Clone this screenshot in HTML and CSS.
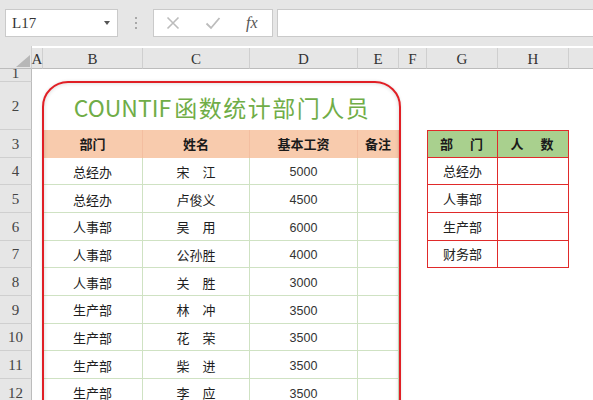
FILE: index.html
```html
<!DOCTYPE html>
<html lang="zh">
<head>
<meta charset="utf-8">
<title>COUNTIF</title>
<link rel="stylesheet" href="styles.css">
</head>
<body>
<div class="toolbar">
  <div class="namebox"><span class="ref">L17</span><span class="drop"></span></div>
  <div class="dots"><i></i><i></i><i></i></div>
  <div class="fbtns">
    <svg class="ico" width="14" height="14" viewBox="0 0 14 14"><path d="M1.5 1.5L12.5 12.5M12.5 1.5L1.5 12.5" stroke="#bcbcbc" stroke-width="1.6" fill="none"/></svg>
    <svg class="ico" width="16" height="14" viewBox="0 0 16 14"><path d="M1.5 7.5L6 12L14.5 2" stroke="#bcbcbc" stroke-width="1.8" fill="none"/></svg>
    <span class="fx">fx</span>
  </div>
  <div class="finput"></div>
</div>
<div class="sheet">
  <div class="corner"><svg width="32" height="23" viewBox="0 0 32 23"><polygon points="30,9 30,21 16,21" fill="#b7b7b7"/></svg></div>
  <div class="ch">A</div><div class="ch">B</div><div class="ch">C</div><div class="ch">D</div><div class="ch">E</div><div class="ch">F</div><div class="ch">G</div><div class="ch">H</div><div class="ch last"></div>

  <div class="rh r1">1</div><div class="c"></div><div class="c"></div><div class="c"></div><div class="c"></div><div class="c"></div><div class="c"></div><div class="c"></div><div class="c"></div><div class="c"></div>

  <div class="rh">2</div><div class="c"></div><div class="title"><span class="lat">COUNTIF</span><span class="cjk">函数统计部门人员</span></div><div class="c"></div><div class="c"></div><div class="c"></div><div class="c"></div>

  <div class="rh">3</div><div class="c"></div><div class="th">部门</div><div class="th">姓名</div><div class="th">基本工资</div><div class="th">备注</div><div class="c"></div><div class="gh first">部　门</div><div class="gh">人　数</div><div class="c"></div>

  <div class="rh">4</div><div class="c"></div><div class="td">总经办</div><div class="td">宋　江</div><div class="td num">5000</div><div class="td"></div><div class="c"></div><div class="gd first">总经办</div><div class="gd"></div><div class="c"></div>
  <div class="rh">5</div><div class="c"></div><div class="td">总经办</div><div class="td">卢俊义</div><div class="td num">4500</div><div class="td"></div><div class="c"></div><div class="gd first">人事部</div><div class="gd"></div><div class="c"></div>
  <div class="rh">6</div><div class="c"></div><div class="td">人事部</div><div class="td">吴　用</div><div class="td num">6000</div><div class="td"></div><div class="c"></div><div class="gd first">生产部</div><div class="gd"></div><div class="c"></div>
  <div class="rh">7</div><div class="c"></div><div class="td">人事部</div><div class="td">公孙胜</div><div class="td num">4000</div><div class="td"></div><div class="c"></div><div class="gd first">财务部</div><div class="gd"></div><div class="c"></div>
  <div class="rh">8</div><div class="c"></div><div class="td">人事部</div><div class="td">关　胜</div><div class="td num">3000</div><div class="td"></div><div class="c"></div><div class="c"></div><div class="c"></div><div class="c"></div>
  <div class="rh">9</div><div class="c"></div><div class="td">生产部</div><div class="td">林　冲</div><div class="td num">3500</div><div class="td"></div><div class="c"></div><div class="c"></div><div class="c"></div><div class="c"></div>
  <div class="rh">10</div><div class="c"></div><div class="td">生产部</div><div class="td">花　荣</div><div class="td num">3500</div><div class="td"></div><div class="c"></div><div class="c"></div><div class="c"></div><div class="c"></div>
  <div class="rh">11</div><div class="c"></div><div class="td">生产部</div><div class="td">柴　进</div><div class="td num">3500</div><div class="td"></div><div class="c"></div><div class="c"></div><div class="c"></div><div class="c"></div>
  <div class="rh">12</div><div class="c"></div><div class="td">生产部</div><div class="td">李　应</div><div class="td num">3500</div><div class="td"></div><div class="c"></div><div class="c"></div><div class="c"></div><div class="c"></div>

  <div class="shape"></div>
</div>
</body>
</html>
```

FILE: styles.css
```css
* { box-sizing: border-box; }
html, body { margin: 0; padding: 0; }
body {
  width: 593px;
  height: 400px;
  overflow: hidden;
  background: #ffffff;
  font-family: "Noto Sans CJK SC", "Noto Sans", sans-serif;
  color: #222;
}
.toolbar {
  height: 46px;
  background: #e6e6e6;
  display: flex;
  align-items: center;
  padding-left: 5px;
}
.namebox {
  width: 113px;
  height: 28px;
  background: #fff;
  border: 1px solid #cacaca;
  display: flex;
  align-items: center;
  justify-content: space-between;
  padding: 0 7px 0 6px;
}
.ref {
  font-family: "Liberation Serif", serif;
  font-size: 15px;
  color: #333;
}
.drop {
  width: 0; height: 0;
  border-left: 3px solid transparent;
  border-right: 3px solid transparent;
  border-top: 4px solid #555;
}
.dots {
  width: 35px;
  display: flex;
  flex-direction: column;
  align-items: center;
  gap: 3px;
}
.dots i {
  display: block;
  width: 2px; height: 2px;
  background: #a8a8a8;
}
.fbtns {
  width: 120px;
  height: 28px;
  background: #fff;
  border: 1px solid #cacaca;
  display: flex;
  align-items: center;
  padding-left: 12px;
  gap: 25px;
}
.fx {
  font-family: "Liberation Serif", serif;
  font-style: italic;
  font-size: 16px;
  color: #555;
}
.finput {
  margin-left: 4px;
  flex: 1;
  height: 28px;
  background: #fff;
  border: 1px solid #cacaca;
  border-right: none;
}
.sheet {
  position: relative;
  display: grid;
  grid-template-columns: 32px 11px 100px 107px 108px 41px 28px 71px 71px 1fr;
  grid-template-rows: 23px 13px 48px repeat(10, 27.67px);
}
.corner {
  background: #e6e6e6;
  border-bottom: 1px solid #bcbcbc;
  border-right: 1px solid #cfcfcf;
}
.corner svg { display: block; }
.ch {
  background: #e6e6e6;
  border-bottom: 1px solid #bcbcbc;
  border-right: 1px solid #cfcfcf;
  font-family: "Liberation Serif", serif;
  font-size: 15px;
  color: #333;
  display: flex;
  justify-content: center;
  align-items: center;
  padding-top: 3px;
  margin-top: 2px;
}
.ch.last { border-right: none; }
.rh {
  background: #e6e6e6;
  border-bottom: 1px solid #cfcfcf;
  border-right: 1px solid #bcbcbc;
  font-family: "Liberation Serif", serif;
  font-size: 15px;
  color: #444;
  display: flex;
  justify-content: center;
  align-items: center;
  overflow: hidden;
  line-height: 1;
  padding-top: 2px;
}
.rh.r1 { align-items: flex-end; padding-top: 0; }
.c { background: #fff; }
.title {
  grid-column: span 4;
  display: flex;
  justify-content: center;
  align-items: center;
  color: #70ad47;
  font-size: 23px;
  padding-top: 2px;
  padding-left: 2px;
}
.title .lat { margin-right: 3px; }
.title .cjk { letter-spacing: 1.5px; }
.th {
  background: #f8cbad;
  border-right: 1px solid #f3bea0;
  font-weight: 700;
  font-size: 13px;
  display: flex;
  justify-content: center;
  align-items: center;
  color: #1a1a1a;
}
.td {
  border-right: 1px solid #cfe2c3;
  border-bottom: 1px solid #cfe2c3;
  font-size: 13px;
  display: flex;
  justify-content: center;
  align-items: center;
  color: #1e1e1e;
  padding-top: 1px;
}
.td.num {
  font-family: "Liberation Sans", Arial, sans-serif;
  font-size: 12.5px;
  color: #333;
  padding-top: 3px;
}
.gh, .gd {
  border-right: 1px solid #e02a2a;
  border-bottom: 1px solid #e02a2a;
  font-size: 13px;
  display: flex;
  justify-content: center;
  align-items: center;
}
.gh {
  background: #a9d08e;
  border-top: 1px solid #e02a2a;
  font-weight: 700;
  letter-spacing: 2px;
  color: #1a1a1a;
}
.gd { color: #222; }
.first { border-left: 1px solid #e02a2a; }
.shape {
  position: absolute;
  left: 42px;
  top: 35px;
  width: 359px;
  height: 360px;
  border: 2px solid #e01f25;
  border-radius: 26px;
  box-shadow: inset 0 0 4px rgba(0,0,0,0.18), 0 0 3px rgba(0,0,0,0.12);
  pointer-events: none;
}
```
